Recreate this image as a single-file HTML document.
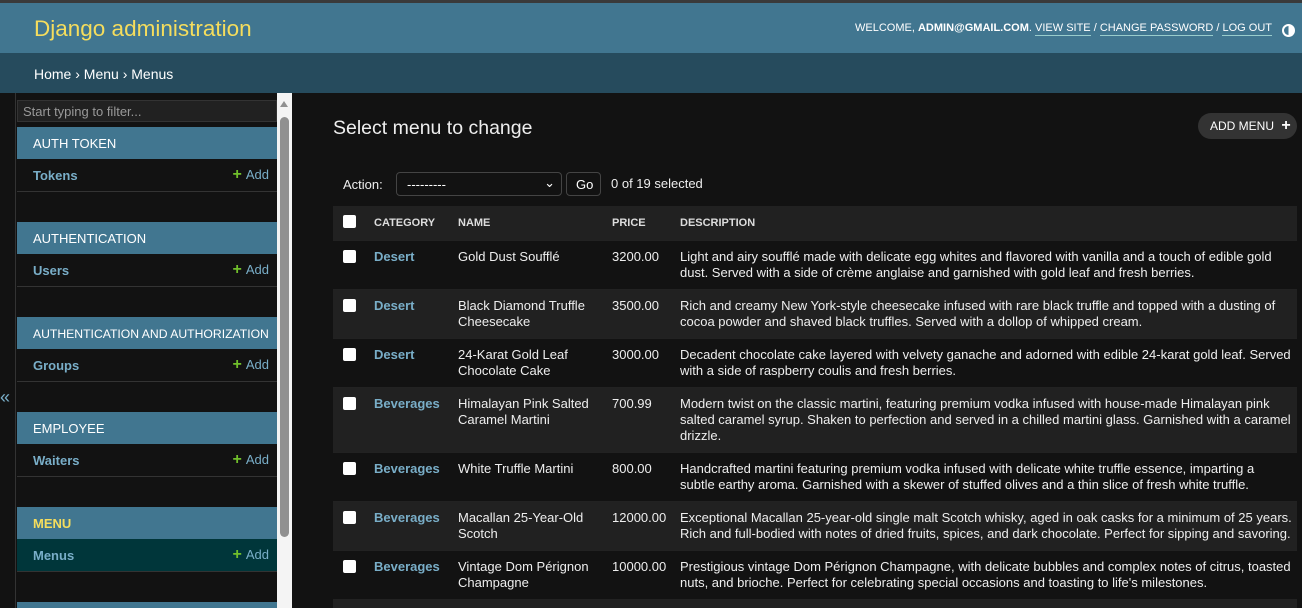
<!DOCTYPE html>
<html><head><meta charset="utf-8">
<style>
*{box-sizing:border-box;margin:0;padding:0}
html,body{width:1302px;height:608px;overflow:hidden}
body{background:#121212;font-family:"Liberation Sans",sans-serif;color:#eee;font-size:13px;position:relative}
a{text-decoration:none}
#topbar{position:absolute;left:0;top:0;width:1302px;height:3px;background:#3a3a3a}
#header{position:absolute;left:0;top:3px;width:1302px;height:50px;background:#417690}
#brand{position:absolute;left:34px;top:13px;font-size:22.5px;color:#f5dd5d;font-weight:300}
#tools{position:absolute;right:30px;top:19px;font-size:11px;color:#fff;white-space:nowrap}
#tools u{text-decoration:none;border-bottom:1px solid #9cc;padding-bottom:1px}
#theme{position:absolute;left:1282px;top:21px;width:13px;height:13px;border-radius:50%;border:2px solid #fff;background:linear-gradient(90deg,transparent 50%,#fff 50%)}
#crumbs{position:absolute;left:0;top:53px;width:1302px;height:40px;background:#264b5d;padding:13px 34px;font-size:14px;color:#fff}
#gutter{position:absolute;left:0;top:93px;width:16px;height:515px;border-right:1px solid #333}
#gutter span{position:absolute;left:0;top:294px;color:#79aec8;font-size:18px}
#nav{position:absolute;left:17px;top:93px;width:260px;height:515px;overflow:hidden}
#filter{position:absolute;left:0;top:7px;width:260px;height:22px;background:#212121;border:1px solid #333;color:#999;font-size:13px;padding:3px 5px}
.cap{position:absolute;left:0;width:260px;height:32px;background:#417690;color:#fff;font-size:13px;padding:9px 16px;white-space:nowrap;overflow:hidden}
.row{position:absolute;left:0;width:260px;height:33px;border-bottom:1px solid #333;padding:9px 16px;font-size:13px;font-weight:bold;color:#79aec8}
.row .add{position:absolute;right:8px;top:8px;font-weight:normal;color:#79aec8}
.row .add b{color:#70bf2b;font-size:16px;font-weight:bold;margin-right:4px;line-height:10px}
#scroll{position:absolute;left:277px;top:93px;width:15px;height:515px;background:#f4f4f4}
#thumb{position:absolute;left:3px;top:24px;width:9px;height:420px;border-radius:5px;background:#909090}
#arrow{position:absolute;left:3px;top:8px;width:0;height:0;border-left:4.5px solid transparent;border-right:4.5px solid transparent;border-bottom:6px solid #909090}
h1{position:absolute;left:333px;top:117px;font-size:19.5px;font-weight:300;color:#eee}
#addbtn{position:absolute;left:1198px;top:113px;width:99px;height:26px;border-radius:13px;background:#333;color:#fff;font-size:12px;padding:6px 12px;white-space:nowrap}
#actions{position:absolute;left:343px;top:177px;font-size:13px}
#sel{position:absolute;left:396px;top:172px;width:166px;height:24px;border:1px solid #444;border-radius:4px;background:#121212;color:#fff;padding:4px 10px}
#go{position:absolute;left:566px;top:172px;width:35px;height:24px;border:1px solid #444;border-radius:4px;color:#fff;padding:4px 9px}
#cnt{position:absolute;left:611px;top:176px}
#tw{position:absolute;left:333px;top:206px;width:964px;height:402px;overflow:hidden}
table{width:964px;border-collapse:collapse;table-layout:fixed}
th{background:#212121;height:34px;font-size:11px;text-align:left;color:#ddd;padding:0 8px;font-weight:bold}
td{vertical-align:top;padding:8px 8px 8px;line-height:16px;white-space:nowrap;border-top:1px solid #222}
tr.alt td{background:#212121}
.cb{display:inline-block;width:13px;height:13px;background:#fff;border-radius:2px;margin-top:1px;margin-left:2px}
td.c{color:#79aec8;font-weight:bold}
</style></head><body>
<div id="topbar"></div>
<div id="header"><div id="brand">Django administration</div>
<div id="tools">WELCOME, <b>ADMIN@GMAIL.COM</b>. <u>VIEW SITE</u> / <u>CHANGE PASSWORD</u> / <u>LOG OUT</u></div>
<div id="theme"></div></div>
<div id="crumbs">Home › Menu › Menus</div>
<div id="gutter"><span>«</span></div>
<div id="nav">
<div id="filter">Start typing to filter...</div>
<div class="cap" style="top:34px">AUTH TOKEN</div>
<div class="row" style="top:66px">Tokens<span class="add"><b>+</b>Add</span></div>
<div class="cap" style="top:129px">AUTHENTICATION</div>
<div class="row" style="top:161px">Users<span class="add"><b>+</b>Add</span></div>
<div class="cap" style="top:224px;font-size:12.2px;padding-top:10px">AUTHENTICATION AND AUTHORIZATION</div>
<div class="row" style="top:256px">Groups<span class="add"><b>+</b>Add</span></div>
<div class="cap" style="top:319px">EMPLOYEE</div>
<div class="row" style="top:351px">Waiters<span class="add"><b>+</b>Add</span></div>
<div class="cap" style="top:414px;color:#f5dd5d;font-weight:bold">MENU</div>
<div class="row" style="top:446px;background:#00363a">Menus<span class="add"><b>+</b>Add</span></div>
<div class="cap" style="top:509px"></div>
</div>
<div id="scroll"><div id="arrow"></div><div id="thumb"></div></div>
<h1>Select menu to change</h1>
<div id="addbtn">ADD MENU <b style="font-size:16px;margin-left:4px;line-height:10px">+</b></div>
<div id="actions">Action:</div>
<div id="sel">--------- <span style="position:absolute;right:6px;top:2px">⌄</span></div>
<div id="go">Go</div>
<div id="cnt">0 of 19 selected</div>
<div id="tw"><table>
<colgroup><col style="width:33px"><col style="width:84px"><col style="width:154px"><col style="width:68px"><col></colgroup>
<tr><th><span class="cb"></span></th><th>CATEGORY</th><th>NAME</th><th>PRICE</th><th>DESCRIPTION</th></tr>
<tr><td><span class="cb"></span></td><td class="c">Desert</td><td>Gold Dust Soufflé</td><td>3200.00</td><td>Light and airy soufflé made with delicate egg whites and flavored with vanilla and a touch of edible gold<br>dust. Served with a side of crème anglaise and garnished with gold leaf and fresh berries.</td></tr>
<tr class="alt"><td><span class="cb"></span></td><td class="c">Desert</td><td>Black Diamond Truffle<br>Cheesecake</td><td>3500.00</td><td>Rich and creamy New York-style cheesecake infused with rare black truffle and topped with a dusting of<br>cocoa powder and shaved black truffles. Served with a dollop of whipped cream.</td></tr>
<tr><td><span class="cb"></span></td><td class="c">Desert</td><td>24-Karat Gold Leaf<br>Chocolate Cake</td><td>3000.00</td><td>Decadent chocolate cake layered with velvety ganache and adorned with edible 24-karat gold leaf. Served<br>with a side of raspberry coulis and fresh berries.</td></tr>
<tr class="alt"><td><span class="cb"></span></td><td class="c">Beverages</td><td>Himalayan Pink Salted<br>Caramel Martini</td><td>700.99</td><td>Modern twist on the classic martini, featuring premium vodka infused with house-made Himalayan pink<br>salted caramel syrup. Shaken to perfection and served in a chilled martini glass. Garnished with a caramel<br>drizzle.</td></tr>
<tr><td><span class="cb"></span></td><td class="c">Beverages</td><td>White Truffle Martini</td><td>800.00</td><td>Handcrafted martini featuring premium vodka infused with delicate white truffle essence, imparting a<br>subtle earthy aroma. Garnished with a skewer of stuffed olives and a thin slice of fresh white truffle.</td></tr>
<tr class="alt"><td><span class="cb"></span></td><td class="c">Beverages</td><td>Macallan 25-Year-Old<br>Scotch</td><td>12000.00</td><td>Exceptional Macallan 25-year-old single malt Scotch whisky, aged in oak casks for a minimum of 25 years.<br>Rich and full-bodied with notes of dried fruits, spices, and dark chocolate. Perfect for sipping and savoring.</td></tr>
<tr><td><span class="cb"></span></td><td class="c">Beverages</td><td>Vintage Dom Pérignon<br>Champagne</td><td>10000.00</td><td>Prestigious vintage Dom Pérignon Champagne, with delicate bubbles and complex notes of citrus, toasted<br>nuts, and brioche. Perfect for celebrating special occasions and toasting to life's milestones.</td></tr>
<tr class="alt"><td><span class="cb"></span></td><td></td><td></td><td></td><td>&nbsp;</td></tr>
</table></div>
</body></html>
